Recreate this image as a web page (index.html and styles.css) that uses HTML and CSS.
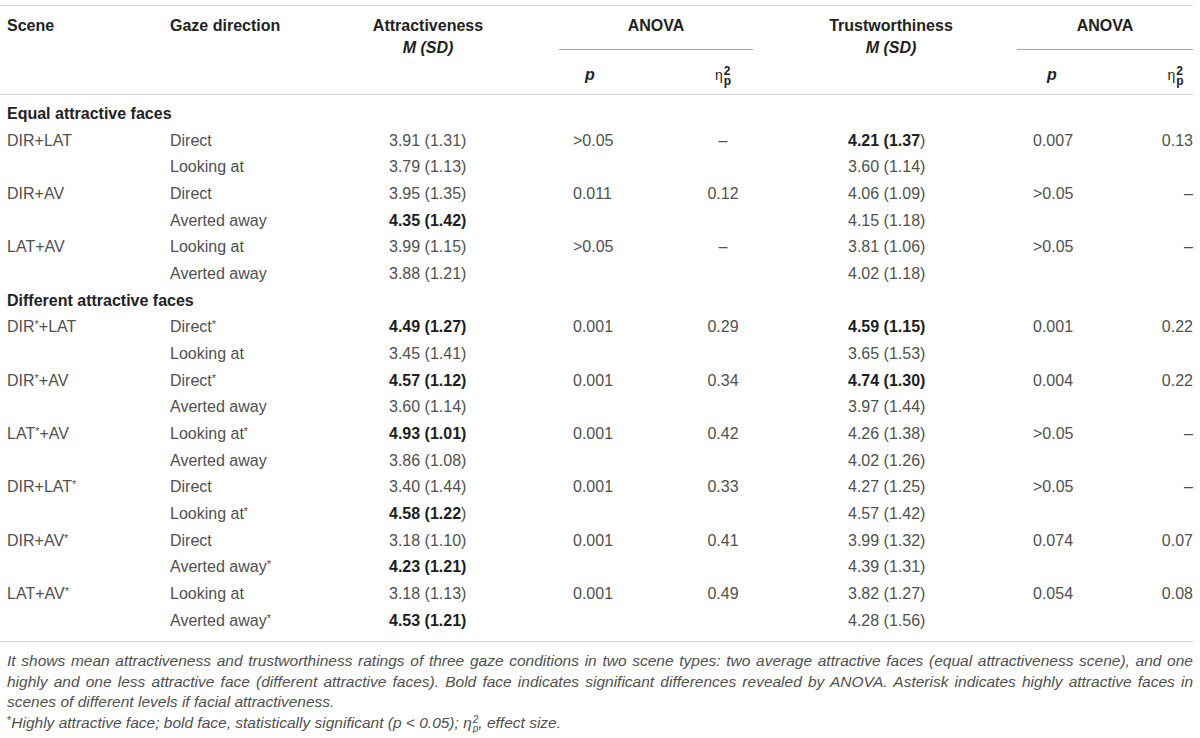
FILE: index.html
```html
<!DOCTYPE html>
<html lang="en">
<head>
<meta charset="utf-8">
<title>Table</title>
<link rel="stylesheet" href="styles.css">
</head>
<body>
<div class="wrap">
<table class="data">
  <colgroup>
    <col class="c-scene"><col class="c-gaze"><col class="c-attr"><col class="c-p1"><col class="c-e1"><col class="c-trust"><col class="c-p2"><col class="c-e2">
  </colgroup>
  <thead>
    <tr class="h1">
      <th rowspan="2" class="tl">Scene</th>
      <th rowspan="2" class="tl">Gaze direction</th>
      <th rowspan="2" class="tc">Attractiveness<br><i>M (SD)</i></th>
      <th colspan="2" class="anova"><div class="anova-1">ANOVA</div></th>
      <th rowspan="2" class="tc">Trustworthiness<br><i>M (SD)</i></th>
      <th colspan="2" class="anova"><div class="anova-2">ANOVA</div></th>
    </tr>
    <tr class="h2">
      <th class="p1h"><i>p</i></th>
      <th class="e1h"><span class="eta">η<span class="ss"><span class="sup">2</span><span class="sub">p</span></span></span></th>
      <th class="p2h"><i>p</i></th>
      <th class="e2h"><span class="eta">η<span class="ss"><span class="sup">2</span><span class="sub">p</span></span></span></th>
    </tr>
  </thead>
  <tbody>
    <tr class="sec first"><td colspan="8">Equal attractive faces</td></tr>
    <tr><td class="s">DIR+LAT</td><td class="g">Direct</td><td class="a">3.91 (1.31)</td><td class="p">&gt;0.05</td><td class="e">–</td><td class="t"><b>4.21 (1.37</b>)</td><td class="q">0.007</td><td class="f">0.13</td></tr>
    <tr><td class="s"></td><td class="g">Looking at</td><td class="a">3.79 (1.13)</td><td class="p"></td><td class="e"></td><td class="t">3.60 (1.14)</td><td class="q"></td><td class="f"></td></tr>
    <tr><td class="s">DIR+AV</td><td class="g">Direct</td><td class="a">3.95 (1.35)</td><td class="p">0.011</td><td class="e">0.12</td><td class="t">4.06 (1.09)</td><td class="q">&gt;0.05</td><td class="f">–</td></tr>
    <tr><td class="s"></td><td class="g">Averted away</td><td class="a"><b>4.35 (1.42)</b></td><td class="p"></td><td class="e"></td><td class="t">4.15 (1.18)</td><td class="q"></td><td class="f"></td></tr>
    <tr><td class="s">LAT+AV</td><td class="g">Looking at</td><td class="a">3.99 (1.15)</td><td class="p">&gt;0.05</td><td class="e">–</td><td class="t">3.81 (1.06)</td><td class="q">&gt;0.05</td><td class="f">–</td></tr>
    <tr><td class="s"></td><td class="g">Averted away</td><td class="a">3.88 (1.21)</td><td class="p"></td><td class="e"></td><td class="t">4.02 (1.18)</td><td class="q"></td><td class="f"></td></tr>
    <tr class="sec"><td colspan="8">Different attractive faces</td></tr>
    <tr><td class="s">DIR<sup>*</sup>+LAT</td><td class="g">Direct<sup>*</sup></td><td class="a"><b>4.49 (1.27)</b></td><td class="p">0.001</td><td class="e">0.29</td><td class="t"><b>4.59 (1.15)</b></td><td class="q">0.001</td><td class="f">0.22</td></tr>
    <tr><td class="s"></td><td class="g">Looking at</td><td class="a">3.45 (1.41)</td><td class="p"></td><td class="e"></td><td class="t">3.65 (1.53)</td><td class="q"></td><td class="f"></td></tr>
    <tr><td class="s">DIR<sup>*</sup>+AV</td><td class="g">Direct<sup>*</sup></td><td class="a"><b>4.57 (1.12)</b></td><td class="p">0.001</td><td class="e">0.34</td><td class="t"><b>4.74 (1.30)</b></td><td class="q">0.004</td><td class="f">0.22</td></tr>
    <tr><td class="s"></td><td class="g">Averted away</td><td class="a">3.60 (1.14)</td><td class="p"></td><td class="e"></td><td class="t">3.97 (1.44)</td><td class="q"></td><td class="f"></td></tr>
    <tr><td class="s">LAT<sup>*</sup>+AV</td><td class="g">Looking at<sup>*</sup></td><td class="a"><b>4.93 (1.01)</b></td><td class="p">0.001</td><td class="e">0.42</td><td class="t">4.26 (1.38)</td><td class="q">&gt;0.05</td><td class="f">–</td></tr>
    <tr><td class="s"></td><td class="g">Averted away</td><td class="a">3.86 (1.08)</td><td class="p"></td><td class="e"></td><td class="t">4.02 (1.26)</td><td class="q"></td><td class="f"></td></tr>
    <tr><td class="s">DIR+LAT<sup>*</sup></td><td class="g">Direct</td><td class="a">3.40 (1.44)</td><td class="p">0.001</td><td class="e">0.33</td><td class="t">4.27 (1.25)</td><td class="q">&gt;0.05</td><td class="f">–</td></tr>
    <tr><td class="s"></td><td class="g">Looking at<sup>*</sup></td><td class="a"><b>4.58 (1.22</b>)</td><td class="p"></td><td class="e"></td><td class="t">4.57 (1.42)</td><td class="q"></td><td class="f"></td></tr>
    <tr><td class="s">DIR+AV<sup>*</sup></td><td class="g">Direct</td><td class="a">3.18 (1.10)</td><td class="p">0.001</td><td class="e">0.41</td><td class="t">3.99 (1.32)</td><td class="q">0.074</td><td class="f">0.07</td></tr>
    <tr><td class="s"></td><td class="g">Averted away<sup>*</sup></td><td class="a"><b>4.23 (1.21)</b></td><td class="p"></td><td class="e"></td><td class="t">4.39 (1.31)</td><td class="q"></td><td class="f"></td></tr>
    <tr><td class="s">LAT+AV<sup>*</sup></td><td class="g">Looking at</td><td class="a">3.18 (1.13)</td><td class="p">0.001</td><td class="e">0.49</td><td class="t">3.82 (1.27)</td><td class="q">0.054</td><td class="f">0.08</td></tr>
    <tr class="last"><td class="s"></td><td class="g">Averted away<sup>*</sup></td><td class="a"><b>4.53 (1.21)</b></td><td class="p"></td><td class="e"></td><td class="t">4.28 (1.56)</td><td class="q"></td><td class="f"></td></tr>
  </tbody>
</table>
<div class="notes">
  <p class="note">
    <span class="ln jl">It shows mean attractiveness and trustworthiness ratings of three gaze conditions in two scene types: two average attractive faces (equal attractiveness scene), and one</span>
    <span class="ln jl">highly and one less attractive face (different attractive faces). Bold face indicates significant differences revealed by ANOVA. Asterisk indicates highly attractive faces in</span>
    <span class="ln">scenes of different levels if facial attractiveness.</span>
  </p>
  <p class="note"><span class="ln"><sup class="ast">*</sup>Highly attractive face; bold face, statistically significant (p &lt; 0.05); <span class="eta-i">η<span class="ss"><span class="sup">2</span><span class="sub">p</span></span></span>, effect size.</span></p>
</div>
</div>
</body>
</html>
```

FILE: styles.css
```css
html, body {
  margin: 0;
  padding: 0;
  background: #ffffff;
}

body {
  font-family: "Liberation Sans", Arial, Helvetica, sans-serif;
  font-size: 16px;
  color: #505050;
}

.wrap {
  width: 1193px;
  padding-top: 5px;
}

.data {
  width: 1193px;
  border-collapse: collapse;
  table-layout: fixed;
}

.c-scene { width: 163px; }
.c-gaze { width: 177px; }
.c-attr { width: 176px; }
.c-p1 { width: 148px; }
.c-e1 { width: 118px; }
.c-trust { width: 218px; }
.c-p2 { width: 158px; }
.c-e2 { width: 35px; }

.data thead tr.h1 {
  border-top: 1px solid #d9d9d9;
}

.data thead tr.h2 {
  border-bottom: 1px solid #d4d4d4;
}

.data th {
  font-weight: bold;
  color: #222222;
  line-height: 22px;
  padding: 0;
}

.data th.tl {
  text-align: left;
  vertical-align: top;
  padding: 9px 0 0 7px;
}

.data th.tc {
  text-align: center;
  vertical-align: top;
  padding: 9px 0 0 0;
}

.data th i {
  font-style: italic;
}

.data th.anova {
  vertical-align: top;
  padding: 9px 0 0 0;
}

.anova-1,
.anova-2 {
  text-align: center;
  padding-bottom: 12px;
  border-bottom: 1px solid #a8a8a8;
}

.anova-1 {
  margin: 0 29px 0 43px;
}

.anova-2 {
  margin: 0 0 0 17px;
}

.data tr.h2 th {
  height: 22px;
  padding: 14px 0 8px 0;
  text-align: center;
  vertical-align: top;
}

.data tr.h2 th.p1h {
  padding-left: 57px;
  padding-right: 57px;
}

.data tr.h2 th.p2h {
  padding-left: 33px;
  padding-right: 87px;
}

.eta {
  display: inline-block;
  font-weight: normal;
  font-size: 14px;
  line-height: 22px;
  height: 22px;
  white-space: nowrap;
  vertical-align: top;
}

.ss {
  display: inline-block;
  vertical-align: middle;
  line-height: 10px;
  font-size: 12px;
  font-weight: bold;
  margin-left: 1px;
  text-align: left;
}

.ss .sup,
.ss .sub {
  display: block;
}

.data td {
  padding: 0;
  line-height: 26.67px;
  white-space: nowrap;
}

.data td b {
  color: #1e1e1e;
}

.data tr.sec td {
  font-weight: bold;
  color: #222222;
  padding-left: 7px;
}

.data tr.sec.first td {
  padding-top: 6px;
}

.data tr.last td {
  padding-bottom: 7px;
}

.data tbody tr.last {
  border-bottom: 1px solid #d4d4d4;
}

.data td.s {
  padding-left: 7px;
}

.data td.g {
  padding-left: 7px;
}

.data td.a {
  padding-left: 49px;
}

.data td.p {
  padding-left: 57px;
}

.data td.e {
  text-align: center;
}

.data td.t {
  padding-left: 66px;
}

.data td.q {
  padding-left: 33px;
}

.data td.f {
  text-align: right;
}

.data sup {
  font-size: 11px;
  line-height: 0;
  vertical-align: 4px;
}

.notes {
  width: 1186px;
  padding: 9px 0 0 7px;
}

.note {
  margin: 0;
  font-style: italic;
  font-size: 15.5px;
  line-height: 20.4px;
}

.ln {
  display: block;
  white-space: nowrap;
  height: 20.4px;
}

.ln.jl {
  text-align: justify;
  text-align-last: justify;
}

.note .ast {
  font-size: 11px;
  line-height: 0;
  vertical-align: 4px;
  font-style: normal;
}

.eta-i {
  display: inline-block;
  white-space: nowrap;
  line-height: 20px;
  height: 20px;
  vertical-align: top;
}

.eta-i .ss {
  font-weight: normal;
  font-size: 10px;
  line-height: 9px;
}
```
